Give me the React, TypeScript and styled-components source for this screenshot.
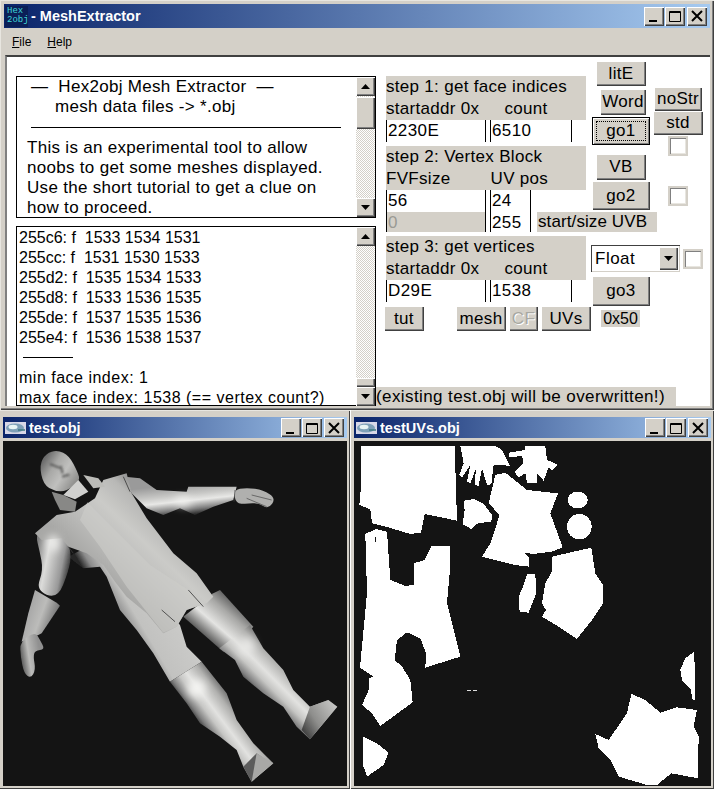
import React, { FC, ReactNode } from 'react';
import styled, { createGlobalStyle } from 'styled-components';

const GlobalStyle = createGlobalStyle`
  html, body {
    margin: 0;
    padding: 0;
    background: #fff;
    font-family: "Liberation Sans", Arial, sans-serif;
  }
`;

const face = '#d4d0c8';

const Desktop = styled.div`
  width: 714px;
  height: 795px;
  overflow: hidden;
  background: #fff;
`;

const Frame = styled.div<{ $w: number; $h: number }>`
  width: ${(p) => p.$w}px;
  height: ${(p) => p.$h}px;
  box-sizing: border-box;
  background: ${face};
  padding: 4px;
  display: flex;
  flex-direction: column;
  flex: none;
  box-shadow: inset 1px 1px 0 #e8e6e0, inset -1px -1px 0 #404040, inset -2px -2px 0 #808080;
`;

const TitleBar = styled.div<{ $h: number }>`
  height: ${(p) => p.$h}px;
  flex: none;
  display: flex;
  align-items: center;
  color: #fff;
  font: bold 14.5px "Liberation Sans", Arial, sans-serif;
  background: linear-gradient(90deg, #0a246a, #a6caf0);
  padding-right: 3px;
`;

const TitleText = styled.span<{ $pl: number }>`
  flex: 1;
  white-space: nowrap;
  padding-left: ${(p) => p.$pl}px;
`;

const HexIcon = styled.div`
  width: 23px;
  height: 21px;
  background: #0b1f56;
  color: #3fd8d8;
  font: 9px/9px "Liberation Mono", monospace;
  padding: 1px 0 0 2px;
  box-sizing: border-box;
  flex: none;
  margin-left: 1px;
`;

const CapButton = styled.div<{ $gap?: number }>`
  width: 20px;
  height: 19px;
  flex: none;
  margin-left: ${(p) => p.$gap ?? 1}px;
  background: ${face};
  display: flex;
  align-items: center;
  justify-content: center;
  box-shadow: inset 1px 1px 0 #fff, inset -1px -1px 0 #404040, inset -2px -2px 0 #808080;
`;

const Caps: FC = () => (
  <>
    <CapButton>
      <svg width="14" height="14" viewBox="0 0 14 14">
        <rect x="2" y="11" width="8" height="2" fill="#000" />
      </svg>
    </CapButton>
    <CapButton>
      <svg width="14" height="14" viewBox="0 0 14 14">
        <path d="M1.5 2.5h11v10h-11z M1 3.5h12" fill="none" stroke="#000" />
      </svg>
    </CapButton>
    <CapButton $gap={2}>
      <svg width="14" height="14" viewBox="0 0 14 14">
        <path d="M2 2l10 10M12 2L2 12" fill="none" stroke="#000" strokeWidth="2" />
      </svg>
    </CapButton>
  </>
);

const MenuBar = styled.div`
  height: 27px;
  flex: none;
  display: flex;
  align-items: center;
  gap: 16px;
  padding-left: 8px;
  font: 12px "Liberation Sans", Arial, sans-serif;
  color: #000;

  u {
    text-decoration: underline;
  }
`;

const Client = styled.div`
  flex: 1;
  min-height: 0;
  background: #fff;
  display: flex;
  border-top: 2px solid #404040;
  border-left: 2px solid #808080;
  margin-left: 1px;
  padding-left: 9px;
  overflow: hidden;
`;

const LeftCol = styled.div`
  width: 360px;
  flex: none;
  padding-top: 19px;
  display: flex;
  flex-direction: column;
  gap: 8px;
`;

const TextBox = styled.div<{ $h: number }>`
  height: ${(p) => p.$h}px;
  box-sizing: border-box;
  border: 1px solid #000;
  display: flex;
  background: #fff;
`;

const TextArea = styled.div<{ $pad: number; $top?: number }>`
  flex: 1;
  min-width: 0;
  padding-left: ${(p) => p.$pad}px;
  padding-top: ${(p) => p.$top ?? 0}px;
  line-height: 20px;
  color: #000;
  white-space: pre;
  overflow: hidden;
`;

const Line = styled.div<{ $ml?: number; $size: number; $ls: number }>`
  margin-left: ${(p) => p.$ml ?? 0}px;
  font-size: ${(p) => p.$size}px;
  letter-spacing: ${(p) => p.$ls}px;
  height: 20px;
`;

const Rule = styled.div<{ $w: number; $ml: number; $mt: number; $mb: number }>`
  width: ${(p) => p.$w}px;
  height: 1px;
  background: #000;
  margin: ${(p) => p.$mt}px 0 ${(p) => p.$mb}px ${(p) => p.$ml}px;
`;

const ScrollBar = styled.div`
  width: 19px;
  flex: none;
  display: flex;
  flex-direction: column;
  background-color: #fff;
  background-image: conic-gradient(${face} 25%, #fff 0 50%, ${face} 0 75%, #fff 0);
  background-size: 2px 2px;
`;

const ScrollBtn = styled.div`
  height: 19px;
  flex: none;
  background: ${face};
  display: flex;
  align-items: center;
  justify-content: center;
  box-shadow: inset 1px 1px 0 #fff, inset -1px -1px 0 #404040, inset -2px -2px 0 #808080;
`;

const ScrollSpace = styled.div<{ $before: number; $thumb: number }>`
  flex: 1;
  padding-top: ${(p) => p.$before}px;

  &::before {
    content: '';
    display: block;
    height: ${(p) => p.$thumb}px;
    background: ${face};
    box-shadow: inset 1px 1px 0 #fff, inset -1px -1px 0 #404040, inset -2px -2px 0 #808080;
  }
`;

const Arrow: FC<{ down?: boolean }> = ({ down }) => (
  <svg width="9" height="5" viewBox="0 0 9 5">
    <path d={down ? 'M0 0h9L4.5 5z' : 'M0 5h9L4.5 0z'} fill="#000" />
  </svg>
);

const Scroll: FC<{ before: number; thumb: number }> = ({ before, thumb }) => (
  <ScrollBar>
    <ScrollBtn>
      <Arrow />
    </ScrollBtn>
    <ScrollSpace $before={before} $thumb={thumb} />
    <ScrollBtn>
      <Arrow down />
    </ScrollBtn>
  </ScrollBar>
);

const RightPanel = styled.div`
  flex: 1;
  min-width: 0;
  padding-top: 4px;
  display: flex;
  flex-direction: column;
`;

const Upper = styled.div`
  height: 245px;
  display: flex;
  padding-left: 10px;
`;

const FormCol = styled.div`
  width: 206px;
  flex: none;
  padding-top: 15px;
  display: flex;
  flex-direction: column;
  font-size: 17px;
`;

const StepLabel = styled.div`
  width: 200px;
  height: 44px;
  box-sizing: border-box;
  background: ${face};
  line-height: 22px;
  white-space: pre;
  letter-spacing: 0.3px;
  flex: none;
`;

const FieldRow = styled.div<{ $h: number; $mb?: number }>`
  height: ${(p) => p.$h}px;
  display: flex;
  gap: 4px;
  margin-bottom: ${(p) => p.$mb ?? 0}px;
  flex: none;
`;

const Field = styled.div<{ $w: number; $off?: boolean }>`
  width: ${(p) => p.$w}px;
  box-sizing: border-box;
  border-left: 1px solid #000;
  border-right: 1px solid #000;
  background: ${(p) => (p.$off ? face : '#fff')};
  color: ${(p) => (p.$off ? '#9a9a94' : '#000')};
  padding-left: 1px;
  line-height: 21px;
  letter-spacing: 0.4px;
  flex: none;
`;

const SideLabel = styled.div`
  margin-left: 2px;
  width: 120px;
  padding-left: 1px;
  box-sizing: border-box;
  background: ${face};
  line-height: 20px;
  white-space: nowrap;
  font-size: 17px;
  letter-spacing: 0.1px;
  flex: none;
`;

const ButtonCol = styled.div`
  width: 58px;
  flex: none;
  display: flex;
  flex-direction: column;
  align-items: flex-end;
`;

const FarCol = styled.div`
  width: 52px;
  margin-left: 2px;
  flex: none;
  display: flex;
  flex-direction: column;
  align-items: center;
  padding-top: 26px;
`;

const Btn = styled.div<{ $w: number; $h: number; $mt?: number; $mr?: number; $ml?: number; $focus?: boolean; $off?: boolean }>`
  width: ${(p) => p.$w}px;
  height: ${(p) => p.$h}px;
  margin-top: ${(p) => p.$mt ?? 0}px;
  margin-right: ${(p) => p.$mr ?? 0}px;
  margin-left: ${(p) => p.$ml ?? 0}px;
  flex: none;
  display: flex;
  align-items: center;
  justify-content: center;
  background: ${face};
  font-size: 17px;
  letter-spacing: 0.3px;
  color: ${(p) => (p.$off ? '#a8a8a2' : '#000')};
  text-shadow: ${(p) => (p.$off ? '1px 1px 0 #fff' : 'none')};
  box-shadow: ${(p) =>
    p.$focus
      ? 'inset 0 0 0 1px #000, inset 1px 1px 0 1px #fff, inset -1px -1px 0 1px #808080'
      : 'inset 1px 1px 0 #fff, inset -1px -1px 0 #404040, inset -2px -2px 0 #808080'};
  position: relative;
  box-sizing: border-box;

  ${(p) =>
    p.$focus
      ? `&::after {
    content: '';
    position: absolute;
    inset: 4px;
    border: 1px dotted #000;
  }`
      : ''}
`;

const Check = styled.div<{ $mt?: number }>`
  width: 20px;
  height: 20px;
  margin-top: ${(p) => p.$mt ?? 0}px;
  flex: none;
  box-sizing: border-box;
  background: #fff;
  border: 2px solid ${face};
  box-shadow: inset 1px 1px 0 #808080, inset -1px -1px 0 #e8e6e0;
`;

const FloatRow = styled.div`
  margin: 35px -53px 0 0;
  width: 112px;
  height: 27px;
  display: flex;
  align-items: center;
  gap: 3px;
  flex: none;
`;

const Select = styled.div`
  width: 89px;
  height: 27px;
  box-sizing: border-box;
  flex: none;
  background: #fff;
  display: flex;
  font-size: 17px;
  line-height: 23px;
  padding: 2px;
  letter-spacing: 0.5px;
  box-shadow: inset 1px 1px 0 #404040, inset -1px -1px 0 ${face};
`;

const SelectText = styled.div`
  flex: 1;
  padding-left: 2px;
`;

const SelectBtn = styled(ScrollBtn)`
  width: 19px;
  height: 23px;
`;

const BottomRow = styled.div`
  display: flex;
  align-items: flex-start;
  padding-left: 8px;
  height: 25px;
  flex: none;
`;

const HexLabel = styled.div`
  margin: 4px 0 0 10px;
  width: 39px;
  height: 17px;
  background: ${face};
  font-size: 16px;
  line-height: 18px;
  text-align: center;
  flex: none;
`;

const Status = styled.div`
  margin-top: 56px;
  width: 300px;
  height: 19px;
  background: ${face};
  font-size: 17px;
  line-height: 20px;
  letter-spacing: 0.4px;
  white-space: nowrap;
  flex: none;
`;

const SubRow = styled.div`
  display: flex;
  gap: 1px;
`;

const SubClient = styled.div`
  flex: 1;
  min-height: 0;
  margin-top: 3px;
  background: #141414;
`;

const Drawing = styled.svg`
  display: block;
  width: 100%;
  height: 100%;
`;

const SubFrame = styled(Frame)`
  padding: 7px 3px 3px;
  box-shadow: inset 0 1px 0 #e8e6e0, inset -1px -1px 0 #404040;
`;

const GlIcon: FC = () => (
  <svg width="24" height="14" viewBox="0 0 24 14" style={{ marginLeft: 2, flex: 'none' }}>
    <rect x="0" y="1" width="21" height="12" fill="#d8d8e8" />
    <ellipse cx="10" cy="7" rx="9" ry="4.5" fill="#7ea0b8" />
    <ellipse cx="8" cy="6" rx="4.5" ry="2.2" fill="#e8f4f4" />
    <path d="M13 9h7" stroke="#3c7a80" strokeWidth="1.5" />
  </svg>
);

const SubWindow: FC<{ title: string; w: number; children: ReactNode }> = ({ title, w, children }) => (
  <SubFrame $w={w} $h={379}>
    <TitleBar $h={21}>
      <GlIcon />
      <TitleText $pl={0}>{title}</TitleText>
      <Caps />
    </TitleBar>
    <SubClient>{children}</SubClient>
  </SubFrame>
);

const mkGrad = (id: string, x1: number, y1: number, x2: number, y2: number, stops: [number, string][]) => (
  <linearGradient id={id} gradientUnits="userSpaceOnUse" x1={x1} y1={y1} x2={x2} y2={y2} key={id}>
    {stops.map(([o, c]) => (
      <stop key={o} offset={o} stopColor={c} />
    ))}
  </linearGradient>
);

const limb: [number, string][] = [
  [0, '#222222'],
  [0.14, '#808080'],
  [0.3, '#c6c6c4'],
  [0.45, '#e2e2e0'],
  [0.7, '#b0b0ae'],
  [0.88, '#6c6c6c'],
  [1, '#333333'],
];

// rounded outline through the midpoints of a traced polygon
const smooth = (pts: string) => {
  const p = pts.split(' ').map((s) => s.split(',').map(Number));
  const mid = (a: number[], b: number[]) => `${(a[0] + b[0]) / 2} ${(a[1] + b[1]) / 2}`;
  let d = `M${mid(p[p.length - 1], p[0])}`;
  p.forEach((pt, i) => {
    d += `Q${pt[0]} ${pt[1]} ${mid(pt, p[(i + 1) % p.length])}`;
  });
  return d + 'Z';
};

// the figure, traced in coordinates of the 3x crop
const MeshFigure: FC = () => (
  <Drawing viewBox="0 0 344 345">
    <defs>
      {mkGrad('torso', 300, 400, 500, 190, [
        [0, '#a8a8a6'],
        [0.35, '#c0c0be'],
        [0.55, '#cbcbc8'],
        [0.8, '#b8b8b6'],
        [1, '#808080'],
      ])}
      {mkGrad('thighL', 385, 615, 570, 505, [
        [0, '#262626'],
        [0.12, '#8c8c8c'],
        [0.3, '#c2c2c0'],
        [0.75, '#cacac8'],
        [1, '#707070'],
      ])}
      {mkGrad('thighR', 600, 598, 700, 482, [
        [0, '#2a2a2a'],
        [0.42, '#e4e4e2'],
        [0.75, '#a8a8a6'],
        [1, '#606060'],
      ])}
      {mkGrad('bootL', 600, 865, 720, 775, limb)}
      {mkGrad('bootR', 735, 735, 850, 620, limb)}
      {mkGrad('armT', 520, 135, 530, 228, [
        [0, '#9a9a9a'],
        [0.35, '#c8c8c6'],
        [0.55, '#e8e8e6'],
        [0.82, '#808080'],
        [1, '#2a2a2a'],
      ])}
      {mkGrad('armL', 105, 350, 215, 372, [
        [0, '#808080'],
        [0.32, '#dcdcda'],
        [0.75, '#989898'],
        [1, '#2a2a2a'],
      ])}
      {mkGrad('foreL', 70, 510, 175, 548, [
        [0, '#a0a0a0'],
        [0.5, '#bcbcba'],
        [0.85, '#7c7c7c'],
        [1, '#242424'],
      ])}
      {mkGrad('handL', 58, 650, 120, 640, [
        [0, '#4c4c4c'],
        [0.45, '#bcbcba'],
        [1, '#909090'],
      ])}
      {mkGrad('head', 125, 70, 225, 135, [
        [0, '#6c6c6c'],
        [0.3, '#a8a8a6'],
        [0.6, '#c0c0be'],
        [1, '#8c8c8a'],
      ])}
      {mkGrad('shoe', 890, 860, 1000, 790, [
        [0, '#343434'],
        [0.45, '#8e8e8c'],
        [1, '#c4c4c2'],
      ])}
      <filter id="soft" x="-10%" y="-10%" width="120%" height="120%">
        <feGaussianBlur stdDeviation="1.4" />
      </filter>
      <filter id="mark" x="-30%" y="-30%" width="160%" height="160%">
        <feGaussianBlur stdDeviation="3.5" />
      </filter>
      <filter id="glow" x="-50%" y="-50%" width="200%" height="200%">
        <feGaussianBlur stdDeviation="12" />
      </filter>
    </defs>
    <g transform="translate(-3 -1) scale(0.3333)">
      <g filter="url(#soft)">
        <polygon
          fill="url(#armT)"
          points="375,110 420,115 470,150 560,155 565,140 710,140 700,180 640,200 585,225 540,205 490,225 440,205 395,160"
        />
        <polygon
          fill="url(#thighL)"
          points="205,350 250,385 300,380 320,410 360,510 410,570 460,640 510,725 605,665 560,620 540,555 490,500 420,400 300,300"
        />
        <polygon fill="url(#thighR)" points="550,530 640,460 660,450 760,560 720,610 670,635" />
        <polygon
          fill="url(#bootL)"
          points="510,725 605,665 680,760 710,840 760,910 795,945 820,970 755,1025 730,980 710,930 660,890 600,850 560,790"
        />
        <polygon
          fill="url(#bootR)"
          points="658,625 750,555 790,625 850,690 880,750 930,800 985,780 1012,800 930,898 890,860 850,800 790,760 730,710 705,660"
        />
        <path
          fill="url(#armL)"
          d={smooth('108,290 122,268 165,255 198,290 214,340 207,390 172,478 108,450 130,390 118,330')}
        />
        <polygon fill="url(#foreL)" points="105,450 170,488 180,497 125,580 115,585 65,605 85,520" />
        <path
          fill="url(#handL)"
          d={smooth('60,605 105,575 120,600 135,628 105,632 100,650 107,690 92,715 72,700 62,650')}
        />
        <path fill="#b0b0ae" d={smooth('700,150 740,143 790,150 828,175 805,208 775,188 740,192 708,190')} />
        <polygon
          fill="url(#torso)"
          points="225,215 285,175 310,120 380,100 395,160 440,235 520,340 590,400 640,470 620,490 560,510 530,560 490,580 440,520 380,470 345,425 310,375 260,340 205,320 185,295 125,300 105,280 170,225"
        />
        <polygon
          fill="#cdcdc9"
          opacity="0.6"
          points="262,187 450,375 565,450 612,490 560,510 530,560 490,578 380,440 300,320 240,240"
        />
        <polygon fill="url(#shoe)" points="930,800 985,780 1012,800 930,898 905,870" />
        <polygon fill="#5c5c5c" points="730,980 770,940 785,950 755,1025" />
        <polygon fill="#a8a8a6" points="770,940 820,970 755,1025" />
        <path fill="url(#head)" d={smooth('118,75 138,40 172,30 207,46 234,98 240,122 200,154 165,154 130,134')} />
        <polygon fill="#d0d0ce" points="190,165 235,120 265,155 225,178" />
        <polygon fill="#888886" points="155,155 190,165 230,185 225,215 180,210 165,180" />
        <polygon fill="#bcbcb8" points="250,105 295,115 315,140 280,145" />
      </g>
      <path
        d="M150,72l30,12M182,78l6,22M186,110l22,-6"
        stroke="#3c3c3c"
        strokeWidth="7"
        opacity="0.65"
        fill="none"
        filter="url(#mark)"
      />
      <g filter="url(#glow)">
        <ellipse cx="590" cy="745" rx="26" ry="26" fill="#f4f4f2" />
        <ellipse cx="740" cy="620" rx="22" ry="26" fill="#e8e8e6" />
        <ellipse cx="160" cy="310" rx="18" ry="24" fill="#eeeeec" />
        <ellipse cx="550" cy="185" rx="24" ry="12" fill="#f4f4f2" />
      </g>
      <path d="M485,510l40,35M565,450l45,50M370,110l20,45M205,320l15,20" stroke="#3a3a3a" strokeWidth="2.5" fill="none" />
      <path d="M755,165l60,15M740,175l60,25M705,150l-3,35" stroke="#444" strokeWidth="2" fill="none" />
    </g>
  </Drawing>
);

const uvPolys = [
  '27,18 308,18 315,242 218,222 207,278 175,282 108,262 60,250 55,208 22,195 27,140',
  '325,18 430,18 450,30 473,77 425,75 418,133 405,135 390,85 380,138 368,135 372,85 355,130 345,125 355,75 330,112 322,105 335,70',
  '470,38 520,30 520,18 580,18 585,60 605,68 618,75 600,92 590,82 575,122 555,100 555,128 525,128 520,100 500,112 488,97 515,70 510,48 472,52',
  '335,182 365,177 395,192 420,225 418,247 380,248 358,267 332,253 338,210',
  '430,105 460,98 525,150 618,160 595,220 632,322 600,335 545,342 518,338 532,355 530,380 490,375 390,350 415,310 443,225 410,190',
  '600,350 718,323 730,400 753,435 753,490 720,540 675,597 620,560 570,530 582,510 570,490 580,430 600,395',
  '525,402 550,402 553,460 530,518 503,515 500,470 515,435',
  '40,282 72,267 105,275 115,420 160,438 185,435 185,370 218,360 238,318 293,318 293,400 285,490 325,650 220,683 222,640 205,595 165,577 135,600 128,660 150,680 175,720 182,787 85,858 60,820 30,795 50,750 50,715 65,710 24,683 45,460',
  '33,890 75,910 110,938 95,975 45,1010 33,975',
  '1027,635 1030,780 1022,778 1015,745 990,720 985,690 1000,655',
  '838,762 880,780 925,818 975,802 1035,810 1025,858 1040,890 1038,1015 958,1000 915,1035 885,1035 800,1010 775,958 740,925 730,882 770,900 825,820',
];

const UvFigure: FC = () => (
  <Drawing viewBox="0 0 357 345">
    <g transform="translate(-2 -1) scale(0.3333)" shapeRendering="crispEdges">
      {uvPolys.map((pts) => (
        <polygon key={pts} points={pts} fill="#fff" />
      ))}
      <ellipse cx="677" cy="180" rx="30" ry="25" fill="#fff" />
      <ellipse cx="682" cy="260" rx="37" ry="38" fill="#fff" />
      <path d="M72,290v15" stroke="#141414" strokeWidth="3" />
      <path d="M345,751h13M362,751h13" stroke="#ddd" strokeWidth="3" />
    </g>
  </Drawing>
);

const big = { $size: 17, $ls: 0.3 };
const logRow = { $size: 16, $ls: 0 };
const logEnd = { $size: 16, $ls: 0.5 };

export default function App() {
  return (
    <Desktop>
      <GlobalStyle />
      <Frame $w={714} $h={410}>
        <TitleBar $h={24}>
          <HexIcon>
            Hex
            <br />
            2obj
          </HexIcon>
          <TitleText $pl={3}>- MeshExtractor</TitleText>
          <Caps />
        </TitleBar>
        <MenuBar>
          <span>
            <u>F</u>ile
          </span>
          <span>
            <u>H</u>elp
          </span>
        </MenuBar>
        <Client>
          <LeftCol>
            <TextBox $h={142}>
              <TextArea $pad={10}>
                <Line {...big} $ml={4}>
                  {'—  Hex2obj Mesh Extractor  —'}
                </Line>
                <Line {...big} $ml={28}>
                  {'mesh data files -> *.obj'}
                </Line>
                <Rule $w={310} $ml={4} $mt={10} $mb={10} />
                <Line {...big}>This is an experimental tool to allow</Line>
                <Line {...big}>noobs to get some meshes displayed.</Line>
                <Line {...big}>Use the short tutorial to get a clue on</Line>
                <Line {...big}>how to proceed.</Line>
              </TextArea>
              <Scroll before={1} thumb={32} />
            </TextBox>
            <TextBox $h={180}>
              <TextArea $pad={2} $top={1}>
                <Line {...logRow}>{'255c6: f  1533 1534 1531'}</Line>
                <Line {...logRow}>{'255cc: f  1531 1530 1533'}</Line>
                <Line {...logRow}>{'255d2: f  1535 1534 1533'}</Line>
                <Line {...logRow}>{'255d8: f  1533 1536 1535'}</Line>
                <Line {...logRow}>{'255de: f  1537 1535 1536'}</Line>
                <Line {...logRow}>{'255e4: f  1536 1538 1537'}</Line>
                <Rule $w={50} $ml={4} $mt={9} $mb={10} />
                <Line {...logEnd}>min face index: 1</Line>
                <Line {...logEnd}>max face index: 1538 (== vertex count?)</Line>
              </TextArea>
              <Scroll before={132} thumb={9} />
            </TextBox>
          </LeftCol>
          <RightPanel>
            <Upper>
              <FormCol>
                <StepLabel>{'step 1: get face indices\nstartaddr 0x     count'}</StepLabel>
                <FieldRow $h={22} $mb={4}>
                  <Field $w={100}>2230E</Field>
                  <Field $w={82}>6510</Field>
                </FieldRow>
                <StepLabel>{'step 2: Vertex Block\nFVFsize        UV pos'}</StepLabel>
                <FieldRow $h={22}>
                  <Field $w={100}>56</Field>
                  <Field $w={41}>24</Field>
                </FieldRow>
                <FieldRow $h={20} $mb={4}>
                  <Field $w={100} $off>
                    0
                  </Field>
                  <Field $w={41}>255</Field>
                  <SideLabel>start/size UVB</SideLabel>
                </FieldRow>
                <StepLabel>{'step 3: get vertices\nstartaddr 0x     count'}</StepLabel>
                <FieldRow $h={22}>
                  <Field $w={100}>D29E</Field>
                  <Field $w={82}>1538</Field>
                </FieldRow>
              </FormCol>
              <ButtonCol>
                <Btn $w={50} $h={25} $mr={4}>
                  litE
                </Btn>
                <Btn $w={46} $h={26} $mt={3} $mr={4}>
                  Word
                </Btn>
                <Btn $w={58} $h={28} $mt={2} $focus>
                  go1
                </Btn>
                <Btn $w={50} $h={26} $mt={9} $mr={4}>
                  VB
                </Btn>
                <Btn $w={58} $h={29} $mt={1}>
                  go2
                </Btn>
                <FloatRow>
                  <Select>
                    <SelectText>Float</SelectText>
                    <SelectBtn>
                      <Arrow down />
                    </SelectBtn>
                  </Select>
                  <Check />
                </FloatRow>
                <Btn $w={58} $h={30} $mt={4}>
                  go3
                </Btn>
              </ButtonCol>
              <FarCol>
                <Btn $w={48} $h={24}>
                  noStr
                </Btn>
                <Btn $w={50} $h={24}>
                  std
                </Btn>
                <Check $mt={1} />
                <Check $mt={30} />
              </FarCol>
            </Upper>
            <BottomRow>
              <Btn $w={40} $h={25}>
                tut
              </Btn>
              <Btn $w={50} $h={25} $ml={32}>
                mesh
              </Btn>
              <Btn $w={29} $h={25} $ml={3} $off>
                CF
              </Btn>
              <Btn $w={50} $h={25} $ml={3}>
                UVs
              </Btn>
              <HexLabel>0x50</HexLabel>
            </BottomRow>
            <Status>(existing test.obj will be overwritten!)</Status>
          </RightPanel>
        </Client>
      </Frame>
      <SubRow>
        <SubWindow title="test.obj" w={350}>
          <MeshFigure />
        </SubWindow>
        <SubWindow title="testUVs.obj" w={363}>
          <UvFigure />
        </SubWindow>
      </SubRow>
    </Desktop>
  );
}
